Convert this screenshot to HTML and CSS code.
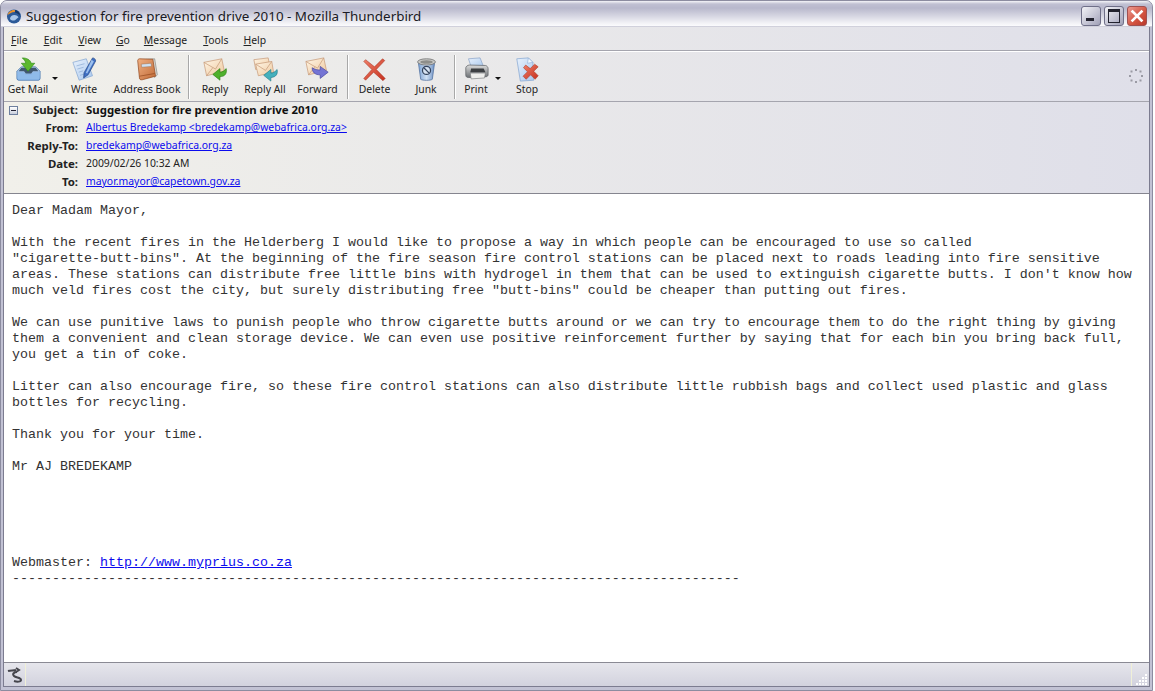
FILE: index.html
```html
<!DOCTYPE html>
<html lang="en">
<head>
    <meta charset="UTF-8">
    <title>Suggestion for fire prevention drive 2010 - Mozilla Thunderbird</title>
    <link rel="stylesheet" href="styles.css">
</head>
<body>
<div class="window">
    <div class="titlebar">
        <svg class="app-logo" width="16" height="16" viewBox="0 0 16 16">
            <circle cx="8" cy="8.500" r="7" fill="#2c5a98"/>
            <path d="M4 11c0-2.500 2-4 4.500-4 1.500 0 3 .8 4 2.200l-3.500 3c-1.800.6-3.500.3-5-1.200z" fill="#a9c6e8"/>
            <path d="M1.500 7c.8-3 4-5.500 7-5 1 .5 1 1.500 0 2C5.800 4.200 3.800 5.500 1.500 7z" fill="#e8912c"/>
            <path d="M9 2c3 .5 5 3 5 6-1-2-3-3-5-3.500z" fill="#173766"/>
        </svg>
        <span class="title-text">Suggestion for fire prevention drive 2010 - Mozilla Thunderbird</span>
        <div class="caption-buttons">
            <div class="cap-btn"><span class="cap-min"></span></div>
            <div class="cap-btn"><span class="cap-max"></span></div>
            <div class="cap-btn cap-close">
                <svg width="20" height="20" viewBox="0 0 20 20"><path d="M5.500 5.500l9 9M14.500 5.500l-9 9" stroke="#fff" stroke-width="2.600" stroke-linecap="square"/></svg>
            </div>
        </div>
    </div>

    <div class="content">
        <div class="menubar">
            <span class="menu-item"><u>F</u>ile</span>
            <span class="menu-item"><u>E</u>dit</span>
            <span class="menu-item"><u>V</u>iew</span>
            <span class="menu-item"><u>G</u>o</span>
            <span class="menu-item"><u>M</u>essage</span>
            <span class="menu-item"><u>T</u>ools</span>
            <span class="menu-item"><u>H</u>elp</span>
        </div>

        <div class="toolbar">
            <div class="tool tool-getmail">
                <svg width="25" height="25" viewBox="0 0 28 28">
                    <defs>
                        <linearGradient id="envGrad" x1="0" y1="0" x2="1" y2="1"><stop offset="0" stop-color="#fff6e6"/><stop offset="1" stop-color="#efc9a0"/></linearGradient>
                        <linearGradient id="blueGrad" x1="0" y1="0" x2="0" y2="1"><stop offset="0" stop-color="#c4dcf6"/><stop offset="1" stop-color="#5d93d6"/></linearGradient>
                        <linearGradient id="paperGrad" x1="0" y1="0" x2="1" y2="1"><stop offset="0" stop-color="#e8f1fc"/><stop offset="1" stop-color="#a9c8ee"/></linearGradient>
                        <linearGradient id="bookGrad" x1="0" y1="0" x2="1" y2="1"><stop offset="0" stop-color="#f0b083"/><stop offset="1" stop-color="#c06a36"/></linearGradient>
                        <linearGradient id="redGrad" x1="0" y1="0" x2="1" y2="1"><stop offset="0" stop-color="#f0806a"/><stop offset="1" stop-color="#c5301f"/></linearGradient>
                        <linearGradient id="binGrad" x1="0" y1="0" x2="1" y2="0"><stop offset="0" stop-color="#7fa4d4"/><stop offset=".5" stop-color="#cfe0f4"/><stop offset="1" stop-color="#6f92c4"/></linearGradient>
                        <linearGradient id="printGrad" x1="0" y1="0" x2="0" y2="1"><stop offset="0" stop-color="#dcdcdc"/><stop offset="1" stop-color="#6c7074"/></linearGradient>
                    </defs>
                    <path d="M1 16l5-5h16l5 5v8c0 1-1 2-2 2H3c-1 0-2-1-2-2z" fill="url(#blueGrad)" stroke="#3f6fa8" stroke-width=".8"/>
                    <path d="M6 12h16l3 4h-6l-2 2.500h-6L9 16H3z" fill="#41586f"/>
                    <path d="M1.500 17h7l2 3h7l2-3h7v6.500c0 1-1 2-2 2H3.500c-1 0-2-1-2-2z" fill="#8fbbea"/>
                    <path d="M7 1c5 0 9 2 10 6h4l-7.500 9L6 7h5c-.5-2.500-2-4-4-6z" fill="#5cb82e" stroke="#2f8a18" stroke-width=".7"/>
                </svg>
                <span>Get Mail</span>
            </div>
            <div class="tool-arrow"></div>
            <div class="tool tool-write">
                <svg width="25" height="25" viewBox="0 0 28 28">
                    <path d="M1 6l15-4 7 19-15 5z" fill="url(#paperGrad)" stroke="#85a6d2" stroke-width=".8"/>
                    <path d="M5 10l9-2.500M6 13.500l7-2M7.500 17l5-1.500M9 20.500l5-1.500" stroke="#9bb6da" stroke-width="1"/>
                    <path d="M23 1c2 0 3.500 1.500 3.500 3.500L18 20l-5 3.500.5-6z" fill="#3f6fc4" stroke="#21437f" stroke-width=".7"/>
                    <path d="M22 3l2.500 2L17 18.500l-1.500-1z" fill="#9cc0ee"/>
                </svg>
                <span>Write</span>
            </div>
            <div class="tool tool-address">
                <svg width="25" height="25" viewBox="0 0 28 28">
                    <path d="M5 3l17-1 3 18-3 3z" fill="#d8d8d4" stroke="#8a8a86" stroke-width=".8"/>
                    <path d="M3 4c0-1 1-2 2-2l15 .500 3 19-15 4c-2 .3-3-.500-3-2z" fill="url(#bookGrad)" stroke="#94491f" stroke-width=".8"/>
                    <path d="M7 8l11-1 .500 3.500-11 1z" fill="#cfe0f0" stroke="#9a6a48" stroke-width=".5"/>
                    <path d="M5 21.500l17-3" stroke="#94491f" stroke-width=".8"/>
                </svg>
                <span>Address Book</span>
            </div>
            <div class="tool-sep"></div>
            <div class="tool tool-reply">
                <svg width="25" height="25" viewBox="0 0 28 28">
                    <path d="M1 6l20-4 3 14-20 5z" fill="url(#envGrad)" stroke="#c69a78" stroke-width=".8"/>
                    <path d="M1 6l13 7.500L21 2M4 21l7-9" fill="none" stroke="#c69a78" stroke-width=".8"/>
                    <path d="M26 13c1 5-1 9-7 9v4l-8-6.500 8-6.500v4c3 0 4.500-1.500 7-4z" fill="#4fb02c" stroke="#2a7c14" stroke-width=".7"/>
                </svg>
                <span>Reply</span>
            </div>
            <div class="tool tool-replyall">
                <svg width="25" height="25" viewBox="0 0 28 28">
                    <path d="M1 3l16-2 2 10-16 3z" fill="url(#envGrad)" stroke="#c69a78" stroke-width=".8"/>
                    <path d="M3 8l18-3 2 12-17 4z" fill="url(#envGrad)" stroke="#c69a78" stroke-width=".8"/>
                    <path d="M3 8l11 7 7-10" fill="none" stroke="#c69a78" stroke-width=".8"/>
                    <path d="M27 14c1 5-1 8.500-7 9v4l-8-6.500 8-6.500v4c3 0 4.500-1.500 7-4z" fill="#45b0bc" stroke="#1f7a88" stroke-width=".7"/>
                </svg>
                <span>Reply All</span>
            </div>
            <div class="tool tool-forward">
                <svg width="25" height="25" viewBox="0 0 28 28">
                    <path d="M1 5l20-4 3 14-20 5z" fill="url(#envGrad)" stroke="#c69a78" stroke-width=".8"/>
                    <path d="M1 5l13 7.500L21 1M4 20l7-9" fill="none" stroke="#c69a78" stroke-width=".8"/>
                    <path d="M8 12c0 5 3 8 9 8v4l9-7-9-6.500v4c-3 0-6-.500-9-2.500z" fill="#7474d4" stroke="#40409c" stroke-width=".7"/>
                </svg>
                <span>Forward</span>
            </div>
            <div class="tool-sep tool-sep-mid"></div>
            <div class="tool tool-delete">
                <svg width="25" height="25" viewBox="0 0 28 28">
                    <path d="M4 3l10 8 9-9 2.500 2L16 14l10 10-2.500 2.500L13 17 4 26l-2-2 9-10L2 5z" fill="url(#redGrad)" stroke="#a83420" stroke-width=".6"/>
                </svg>
                <span>Delete</span>
            </div>
            <div class="tool tool-junk">
                <svg width="25" height="25" viewBox="0 0 28 28">
                    <path d="M5 7l2.500 18c2 1.500 11 1.500 13 0L23 7z" fill="url(#binGrad)" stroke="#48699b" stroke-width=".8"/>
                    <ellipse cx="14" cy="5.500" rx="10" ry="3.500" fill="#c9c9c6" stroke="#707070" stroke-width=".9"/>
                    <ellipse cx="14" cy="5.500" rx="7" ry="2" fill="#8e8e8a"/>
                    <circle cx="14" cy="15" r="4.500" fill="#d7e3f2" stroke="#34445e" stroke-width="1.400"/>
                    <path d="M11 12l6 6" stroke="#34445e" stroke-width="1.400"/>
                </svg>
                <span>Junk</span>
            </div>
            <div class="tool-sep tool-sep-last"></div>
            <div class="tool tool-print">
                <svg width="25" height="25" viewBox="0 0 28 28">
                    <path d="M5 2l13-1 4 10H8z" fill="url(#paperGrad)" stroke="#8aa4c8" stroke-width=".8"/>
                    <path d="M2 12c0-1 2-3 4-3l18 .5c1.500 0 3 2 3 3.500v7c0 1-1 2-2 2l-20 1c-2 0-3-1-3-2.500z" fill="url(#printGrad)" stroke="#5a5e62" stroke-width=".8"/>
                    <path d="M8 13h14l2 4H7z" fill="#3c3f42"/>
                    <path d="M7 18h17l-1 5.500L8 24.500z" fill="#eeeeec" stroke="#75787a" stroke-width=".7"/>
                </svg>
                <span>Print</span>
            </div>
            <div class="tool-arrow tool-arrow-wide"></div>
            <div class="tool tool-stop">
                <svg width="25" height="25" viewBox="0 0 28 28">
                    <path d="M2 2l13-1 5 5 1 20-15 1z" fill="url(#paperGrad)" stroke="#85a6d2" stroke-width=".8"/>
                    <path d="M15 1l-1 6 6-1z" fill="#f2f7fd" stroke="#85a6d2" stroke-width=".6"/>
                    <path d="M12 9l5 4 5-5 4 3-5 5 5 5-3.500 4-5-5-5 5-3.500-3.500 5-5-4.500-4.500z" fill="url(#redGrad)" stroke="#a83420" stroke-width=".6"/>
                </svg>
                <span>Stop</span>
            </div>
            <div class="toolbar-space"></div>
            <svg class="throbber" width="16" height="16" viewBox="0 0 16 16">
                <g fill="#9a9aa4">
                    <rect x="7" y="1" width="2" height="2"/><rect x="11.500" y="2.500" width="2" height="2"/>
                    <rect x="13" y="7" width="2" height="2"/><rect x="11.500" y="11.500" width="2" height="2"/>
                    <rect x="7" y="13" width="2" height="2"/><rect x="2.500" y="11.500" width="2" height="2"/>
                    <rect x="1" y="7" width="2" height="2"/><rect x="2.500" y="2.500" width="2" height="2"/>
                </g>
            </svg>
        </div>

        <div class="msg-header">
            <div class="twisty"><span></span></div>
            <div class="header-grid">
                <div class="h-label">Subject:</div><div class="h-value h-subject">Suggestion for fire prevention drive 2010</div>
                <div class="h-label">From:</div><div class="h-value"><a href="#">Albertus Bredekamp &lt;bredekamp@webafrica.org.za&gt;</a></div>
                <div class="h-label">Reply-To:</div><div class="h-value"><a href="#">bredekamp@webafrica.org.za</a></div>
                <div class="h-label">Date:</div><div class="h-value">2009/02/26 10:32 AM</div>
                <div class="h-label">To:</div><div class="h-value"><a href="#">mayor.mayor@capetown.gov.za</a></div>
            </div>
        </div>

        <div class="msg-body">
<pre>Dear Madam Mayor,

With the recent fires in the Helderberg I would like to propose a way in which people can be encouraged to use so called
"cigarette-butt-bins". At the beginning of the fire season fire control stations can be placed next to roads leading into fire sensitive
areas. These stations can distribute free little bins with hydrogel in them that can be used to extinguish cigarette butts. I don't know how
much veld fires cost the city, but surely distributing free "butt-bins" could be cheaper than putting out fires.

We can use punitive laws to punish people who throw cigarette butts around or we can try to encourage them to do the right thing by giving
them a convenient and clean storage device. We can even use positive reinforcement further by saying that for each bin you bring back full,
you get a tin of coke.

Litter can also encourage fire, so these fire control stations can also distribute little rubbish bags and collect used plastic and glass
bottles for recycling.

Thank you for your time.

Mr AJ BREDEKAMP





Webmaster: <a href="#">http://www.myprius.co.za</a>
-------------------------------------------------------------------------------------------</pre>
        </div>

        <div class="statusbar">
            <div class="status-icon">
                <svg width="18" height="18" viewBox="0 0 18 18"><path d="M2 5c3-1 5 0 8-1M10 2l3 2-3 2M11 6c-3 0-5 2-3 4 2 2 7 1 7 4 0 2-4 2-7 1" fill="none" stroke="#45454c" stroke-width="2"/></svg>
            </div>
            <div class="status-text"></div>
            <div class="status-grip">
                <svg width="14" height="14" viewBox="0 0 14 14"><g fill="#fff"><rect x="10" y="2" width="2" height="2"/><rect x="7" y="5" width="2" height="2"/><rect x="10" y="5" width="2" height="2"/><rect x="4" y="8" width="2" height="2"/><rect x="7" y="8" width="2" height="2"/><rect x="10" y="8" width="2" height="2"/><rect x="1" y="11" width="2" height="2"/><rect x="4" y="11" width="2" height="2"/><rect x="7" y="11" width="2" height="2"/><rect x="10" y="11" width="2" height="2"/></g></svg>
            </div>
        </div>
    </div>
</div>
</body>
</html>
```

FILE: styles.css
```css
html, body {
    margin: 0;
    padding: 0;
    background-color: #fff;
}

body {
    font-family: "Noto Sans", "Liberation Sans", sans-serif;
    font-size: 10.4px;
    color: #222;
    overflow: hidden;
}

.window {
    width: 1153px;
    height: 691px;
    box-sizing: border-box;
    display: flex;
    flex-direction: column;
    background-color: #c2c2d4;
    border: 1px solid #8c8ca0;
    border-radius: 7px 7px 0 0;
    overflow: hidden;
}

/* title bar */
.titlebar {
    height: 26px;
    flex: none;
    box-sizing: border-box;
    display: flex;
    align-items: center;
    padding: 3px 5px 0 5px;
    background: linear-gradient(to bottom, #f4f4f8 0, #c0c0d2 3px, #b8b8cc 7px, #d6d6e2 15px, #f2f2f6 22px, #fbfbfd 25px, #a6a6ba 26px);
}

.app-logo {
    flex: none;
    margin-right: 4px;
}

.title-text {
    font-size: 13.4px;
    color: #1a1a24;
    white-space: nowrap;
}

.caption-buttons {
    margin-left: auto;
    display: flex;
    gap: 3px;
}

.cap-btn {
    width: 20px;
    height: 20px;
    box-sizing: border-box;
    border: 1px solid #6f6f88;
    border-radius: 3px;
    background: linear-gradient(135deg, #f2f2f6, #c2c2d2 60%, #a0a0b6);
    display: flex;
    align-items: center;
    justify-content: center;
}

.cap-min {
    width: 8px;
    height: 3px;
    background-color: #22222e;
    margin-top: 8px;
    margin-right: 2px;
}

.cap-max {
    width: 10px;
    height: 10px;
    border: 1px solid #22222e;
    border-top-width: 3px;
}

.cap-close {
    background: linear-gradient(135deg, #eb9a90, #d2523f 60%, #b8392c);
    border-color: #a05050;
}

.cap-close svg {
    flex: none;
    margin: -1px;
}

/* everything under the title bar */
.content {
    flex: 1;
    min-height: 0;
    margin: 0 2px 3px 2px;
    border: 1px solid #7c7c90;
    border-top: none;
    display: flex;
    flex-direction: column;
}

.menubar {
    height: 24px;
    flex: none;
    display: flex;
    align-items: center;
    padding: 2px 0 0 7px;
    box-sizing: border-box;
    background: linear-gradient(to right, #f1f0ea, #dfdfe9);
    border-bottom: 1px solid #a5a5ae;
}

.menu-item {
    margin-right: 16px;
}

.menu-item:nth-child(3) { margin-right: 15px; }
.menu-item:nth-child(4) { margin-right: 14px; }
.menu-item:nth-child(6) { margin-right: 15px; }

.toolbar {
    height: 51px;
    flex: none;
    box-sizing: border-box;
    display: flex;
    align-items: stretch;
    padding: 1px 5px 0 1px;
    background: linear-gradient(to right, #f1f0ea, #dfdfe9);
    border-top: 1px solid #fff;
    border-bottom: 1px solid #a5a5ae;
}

.tool {
    width: 48px;
    flex: none;
    display: flex;
    flex-direction: column;
    align-items: center;
    justify-content: flex-end;
    padding-bottom: 5px;
    box-sizing: border-box;
    white-space: nowrap;
}

.tool-getmail { width: 46px; }
.tool-write { width: 48px; }
.tool-address { width: 78px; }
.tool-reply { width: 48px; }
.tool-replyall { width: 52px; }
.tool-forward { width: 53px; }
.tool-delete { width: 49px; }
.tool-junk { width: 54px; }
.tool-print { width: 36px; margin-left: 1px; }
.tool-stop { width: 46px; }

.tool-arrow {
    width: 9px;
    flex: none;
}

.tool-arrow-wide {
    width: 10px;
}

.tool-arrow::after {
    content: "";
    display: block;
    margin: 24px 0 0 1px;
    width: 0;
    height: 0;
    border-left: 3px solid transparent;
    border-right: 3px solid transparent;
    border-top: 3px solid #111;
}

.tool-sep {
    width: 1px;
    flex: none;
    margin: 2px 1px 2px 2px;
    background-color: #a8a8a8;
    border-right: 1px solid #fff;
}

.tool-sep-mid {
    margin-left: 3px;
}

.tool-sep-last {
    margin-left: 1px;
}

.toolbar-space {
    flex: 1;
}

.throbber {
    flex: none;
    align-self: center;
    margin-bottom: 2px;
}

/* message headers */
.msg-header {
    height: 92px;
    flex: none;
    box-sizing: border-box;
    display: flex;
    background: linear-gradient(to right, #f1f0ea, #dfdfe9);
    border-bottom: 1px solid #85858f;
}

.twisty {
    width: 15px;
    flex: none;
    padding: 4px 0 0 5px;
    box-sizing: border-box;
}

.twisty span {
    display: block;
    width: 9px;
    height: 9px;
    box-sizing: border-box;
    border: 1px solid #6d7f9e;
    background: linear-gradient(to bottom, #fff, #c8cedc);
    position: relative;
}

.twisty span::after {
    content: "";
    position: absolute;
    left: 1px;
    right: 1px;
    top: 3px;
    height: 1px;
    background-color: #223;
}

.header-grid {
    display: grid;
    grid-template-columns: 59px 1fr;
    grid-auto-rows: 18px;
    column-gap: 8px;
    align-items: center;
    margin-top: -2px;
}

.h-label {
    font-size: 11.4px;
    font-weight: bold;
    text-align: right;
    white-space: nowrap;
}

.h-value {
    white-space: nowrap;
}

.h-subject {
    font-size: 11.4px;
    font-weight: bold;
    color: #111;
}

.h-value a {
    color: #0b0bee;
}

/* message text */
.msg-body {
    flex: 1;
    min-height: 0;
    background-color: #fff;
    padding: 9px 8px 0 8px;
    overflow: hidden;
}

.msg-body pre {
    margin: 0;
    font-family: "Liberation Mono", monospace;
    font-size: 13.33px;
    line-height: 16px;
    color: #333;
}

.msg-body a {
    color: #0b0bee;
}

/* status bar */
.statusbar {
    height: 23px;
    flex: none;
    display: flex;
    background: linear-gradient(to bottom, #e6e6ec, #d2d2de);
    border-top: 1px solid #8a8a94;
}

.status-icon {
    width: 21px;
    flex: none;
    display: flex;
    align-items: center;
    justify-content: center;
    border-right: 1px solid #f0f0d8;
}

.status-text {
    flex: 1;
}

.status-grip {
    width: 17px;
    flex: none;
    display: flex;
    align-items: flex-end;
    justify-content: flex-end;
    border-left: 1px solid #f0f0d8;
}
```
